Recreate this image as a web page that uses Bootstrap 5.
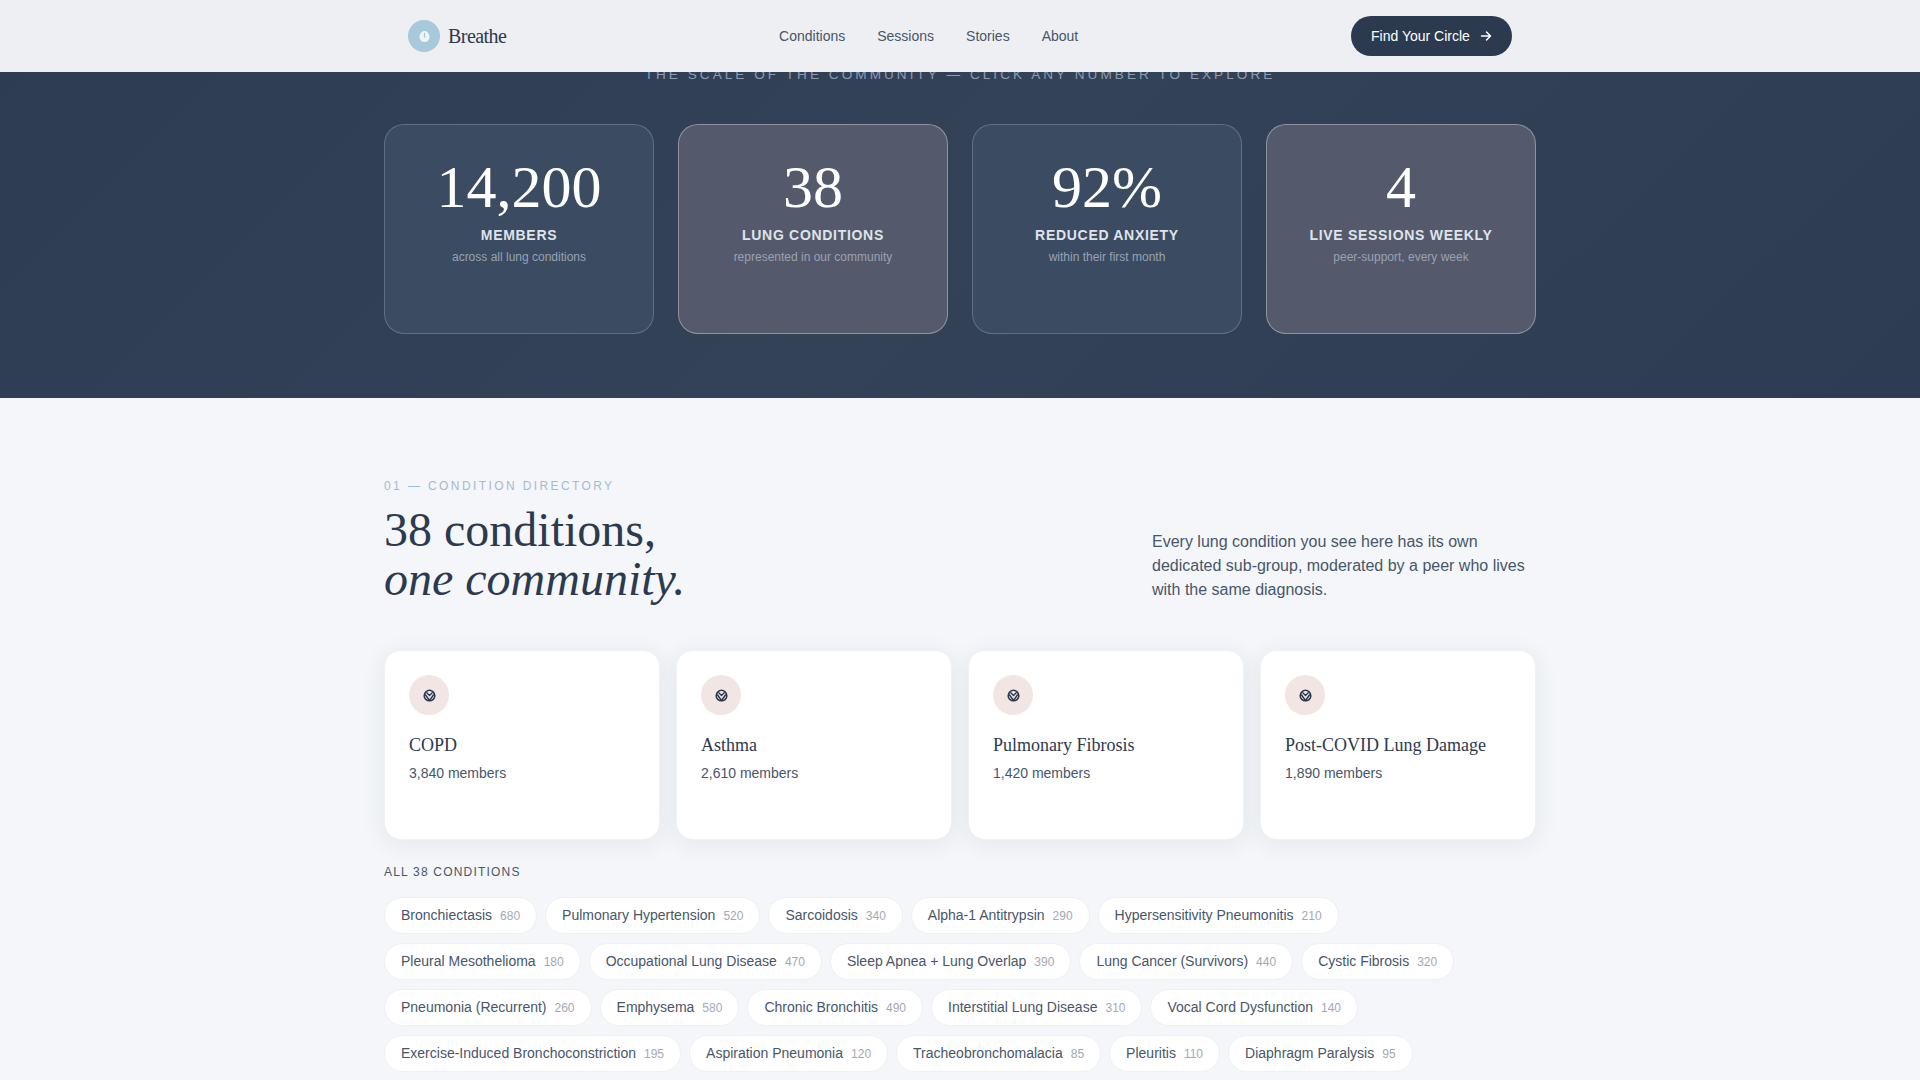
<!DOCTYPE html>
<html lang="en">
<head>
    <meta charset="UTF-8">
    <meta name="viewport" content="width=device-width, initial-scale=1.0">
    <title>Breathe</title>
    <link href="https://cdn.jsdelivr.net/npm/bootstrap@5.3.0/dist/css/bootstrap.min.css" rel="stylesheet">
    <style>
        body {
            font-family: "Liberation Sans", Arial, sans-serif;
            background: #f4f6f9;
            color: #2c3a50;
            overflow: hidden;
        }
        .serif { font-family: "Liberation Serif", "Times New Roman", serif; }
        .wrap-main { width: 1152px; margin: 0 auto; }

        /* Nav */
        .top-nav { height: 72px; background: #edeff3; padding: 0; }
        .top-inner { padding: 0 24px; }
        .logo-dot { width: 32px; height: 32px; background: #a8c8dc; }
        .logo-name { font-size: 20px; letter-spacing: -0.55px; color: #2c3a50; }
        .nav-links { gap: 32px; }
        .nav-links a { font-size: 14px; color: #47566b; text-decoration: none; }
        .cta-btn {
            height: 40px; width: 161px; font-size: 14px; background: #2c3a50; color: #fff;
            border: 0; gap: 10px; padding: 0;
        }

        /* Stats */
        .stats-band {
            height: 398px; padding-top: 67px;
            background: linear-gradient(135deg, #2d3c53, #344258 50%, #2d3c53);
        }
        .band-eyebrow {
            font-size: 13.6px; line-height: 15px; letter-spacing: 3.03px; color: #8c9cb0;
            margin-bottom: 42px;
        }
        .stat-grid { display: grid; grid-template-columns: repeat(4, 1fr); gap: 24px; }
        .stat-box {
            height: 210px; padding-top: 30px; border-radius: 20px;
            background: #3b4b62;
            border: 1px solid rgba(255, 255, 255, 0.2);
        }
        .stat-box.warm { background: #545a6b; border-color: rgba(255, 255, 255, 0.35); }
        .stat-num { font-size: 60px; line-height: 64px; color: #fff; }
        .stat-label {
            font-size: 14px; font-weight: 700; letter-spacing: 0.05em; color: #dfe4ea;
            margin-top: 6px; line-height: 20px;
        }
        .stat-sub { font-size: 12px; line-height: 18px; color: #98a3b1; margin-top: 3px; }

        /* Directory */
        .dir-eyebrow { font-size: 12px; line-height: 14px; letter-spacing: 0.2em; color: #a3bccd; margin-top: 81px; }
        .dir-title { font-size: 48px; line-height: 49px; font-weight: 400; color: #2c3a50; margin: 12px 0 0; }
        .dir-copy { width: 384px; font-size: 16px; line-height: 24px; color: #47566b; margin: 0 0 1px; }
        .cond-grid { display: grid; grid-template-columns: repeat(4, 1fr); gap: 16px; margin-top: 47px; }
        .cond-box {
            height: 190px; padding: 24px; border: 1px solid #f0f2f5; border-radius: 17px; background: #fff;
            box-shadow: 0 4px 24px rgba(44, 58, 80, 0.08);
        }
        .cond-icon { width: 40px; height: 40px; background: #f1e6e4; }
        .cond-name { font-size: 18px; line-height: 24px; color: #2c3a50; margin-top: 18px; }
        .cond-count { font-size: 14px; line-height: 20px; color: #47566b; margin-top: 6px; }
        .all-label { font-size: 12px; line-height: 14px; letter-spacing: 0.1em; color: #47566b; margin: 25px 0 18px; }
        .pill-wrap { gap: 9px 8px; }
        .cond-pill {
            height: 37px; padding: 0 16px; gap: 8px; background: #fff; color: #47566b;
            border: 1px solid #eef0f3; font-size: 14px;
        }
        .cond-pill em { font-style: normal; font-size: 12px; color: #a2a9b4; }
    </style>
</head>
<body>
<nav class="navbar fixed-top top-nav">
    <div class="wrap-main top-inner d-flex align-items-center justify-content-between">
        <a class="d-flex align-items-center gap-2 text-decoration-none" href="#">
            <span class="logo-dot rounded-circle d-flex align-items-center justify-content-center">
                <svg width="13" height="13" viewBox="0 0 13 13"><path d="M6.500 1C9 1 11.500 3.600 11.500 7c0 2.900-2.100 5-5 5s-5-2.100-5-5C1.500 3.600 4 1 6.500 1z" fill="#eef4f8"/><path d="M6.500 3.500V7" stroke="#a8c8dc" stroke-width="1.300" stroke-linecap="round"/></svg>
            </span>
            <span class="logo-name serif">Breathe</span>
        </a>
        <div class="nav-links d-flex">
            <a href="#">Conditions</a>
            <a href="#">Sessions</a>
            <a href="#">Stories</a>
            <a href="#">About</a>
        </div>
        <button class="cta-btn btn rounded-pill d-flex align-items-center justify-content-center">
            Find Your Circle
            <svg width="12" height="12" viewBox="0 0 12 12" fill="none" stroke="#fff" stroke-width="1.5" stroke-linecap="round" stroke-linejoin="round"><path d="M1.500 6h9M6.500 2l4 4-4 4"/></svg>
        </button>
    </div>
</nav>

<section class="stats-band">
    <div class="wrap-main">
        <p class="band-eyebrow text-center text-uppercase">The scale of the community — click any number to explore</p>
        <div class="stat-grid">
            <div class="stat-box text-center">
                <div class="stat-num serif">14,200</div>
                <div class="stat-label text-uppercase">Members</div>
                <div class="stat-sub">across all lung conditions</div>
            </div>
            <div class="stat-box warm text-center">
                <div class="stat-num serif">38</div>
                <div class="stat-label text-uppercase">Lung conditions</div>
                <div class="stat-sub">represented in our community</div>
            </div>
            <div class="stat-box text-center">
                <div class="stat-num serif">92%</div>
                <div class="stat-label text-uppercase">Reduced anxiety</div>
                <div class="stat-sub">within their first month</div>
            </div>
            <div class="stat-box warm text-center">
                <div class="stat-num serif">4</div>
                <div class="stat-label text-uppercase">Live sessions weekly</div>
                <div class="stat-sub">peer-support, every week</div>
            </div>
        </div>
    </div>
</section>

<section class="wrap-main">
    <div class="dir-eyebrow text-uppercase">01 — Condition directory</div>
    <div class="d-flex justify-content-between align-items-end">
        <h2 class="dir-title serif">38 conditions,<br><i>one community.</i></h2>
        <p class="dir-copy">Every lung condition you see here has its own dedicated sub-group, moderated by a peer who lives with the same diagnosis.</p>
    </div>

    <div class="cond-grid" id="condCards"></div>

    <div class="all-label text-uppercase">All 38 conditions</div>
    <div class="pill-wrap d-flex flex-wrap" id="condPills"></div>
</section>

<script>
    const featured = [
        ['COPD', '3,840'], ['Asthma', '2,610'],
        ['Pulmonary Fibrosis', '1,420'], ['Post-COVID Lung Damage', '1,890']
    ];
    const icon = '<svg width="13" height="13" viewBox="0 0 13 13" fill="none" stroke="#2c3a50" stroke-width="1.600" stroke-linejoin="round"><path d="M6.500 1.200C9 1.200 11.800 3.800 11.800 6.700c0 2.800-2.400 5.100-5.300 5.100s-5.300-2.300-5.300-5.100C1.200 3.800 4 1.200 6.500 1.200z"/><path d="M2.200 5.500 6.500 11.500l4.300-6M3.500 3.500 6.500 6.500l3-3" stroke-width="1.400"/></svg>';
    document.getElementById('condCards').innerHTML = featured.map(c => `
        <div class="cond-box">
            <div class="cond-icon rounded-circle d-flex align-items-center justify-content-center">${icon}</div>
            <div class="cond-name serif">${c[0]}</div>
            <div class="cond-count">${c[1]} members</div>
        </div>`).join('');

    const others = [
        ['Bronchiectasis', 680], ['Pulmonary Hypertension', 520], ['Sarcoidosis', 340], ['Alpha-1 Antitrypsin', 290], ['Hypersensitivity Pneumonitis', 210],
        ['Pleural Mesothelioma', 180], ['Occupational Lung Disease', 470], ['Sleep Apnea + Lung Overlap', 390], ['Lung Cancer (Survivors)', 440], ['Cystic Fibrosis', 320],
        ['Pneumonia (Recurrent)', 260], ['Emphysema', 580], ['Chronic Bronchitis', 490], ['Interstitial Lung Disease', 310], ['Vocal Cord Dysfunction', 140],
        ['Exercise-Induced Bronchoconstriction', 195], ['Aspiration Pneumonia', 120], ['Tracheobronchomalacia', 85], ['Pleuritis', 110], ['Diaphragm Paralysis', 95]
    ];
    document.getElementById('condPills').innerHTML = others.map(c =>
        `<span class="cond-pill rounded-pill d-inline-flex align-items-center">${c[0]}<em>${c[1]}</em></span>`).join('');
</script>
<script src="https://cdn.jsdelivr.net/npm/bootstrap@5.3.0/dist/js/bootstrap.bundle.min.js"></script>
</body>
</html>
